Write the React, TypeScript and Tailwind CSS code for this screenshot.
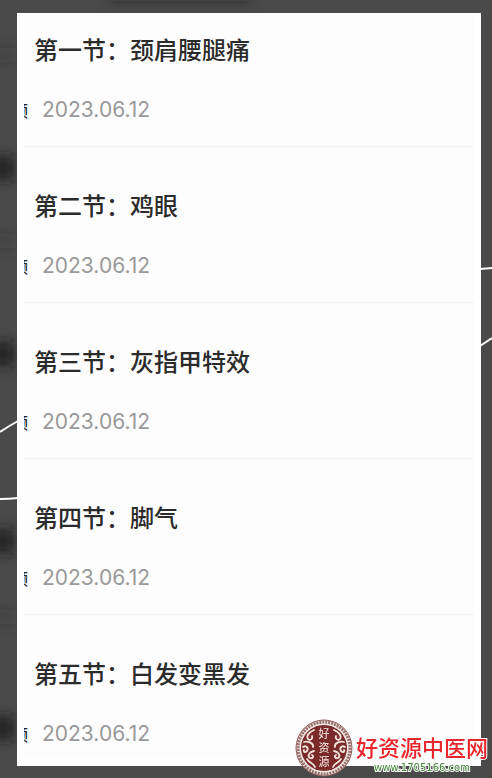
const lessons = [
  { title: "第一节：颈肩腰腿痛", date: "2023.06.12" },
  { title: "第二节：鸡眼", date: "2023.06.12" },
  { title: "第三节：灰指甲特效", date: "2023.06.12" },
  { title: "第四节：脚气", date: "2023.06.12" },
  { title: "第五节：白发变黑发", date: "2023.06.12" },
];

const Backdrop = () => (
  <svg
    className="absolute inset-0 h-full w-full"
    viewBox="0 0 492 778"
    preserveAspectRatio="none"
    aria-hidden="true"
  >
    <defs>
      <filter id="soft" x="-100%" y="-100%" width="300%" height="300%">
        <feGaussianBlur stdDeviation="6" />
      </filter>
    </defs>
    <g fill="#1c1c1c" filter="url(#soft)">
      <rect x="-8" y="156" width="22" height="24" opacity="0.8" />
      <rect x="-8" y="342" width="22" height="24" opacity="0.8" />
      <rect x="-8" y="529" width="22" height="24" opacity="0.8" />
      <rect x="-8" y="716" width="22" height="24" opacity="0.8" />
      <rect x="110" y="-8" width="140" height="10" opacity="0.4" />
      <rect x="-8" y="48" width="24" height="14" opacity="0.2" />
      <rect x="-8" y="234" width="24" height="14" opacity="0.2" />
      <rect x="-8" y="610" width="24" height="14" opacity="0.2" />
    </g>
    <g fill="none" stroke="#fff" strokeWidth="2">
      <path d="M0 432Q9 426 18 421" />
      <path d="M0 499Q9 499 18 498" />
      <path d="M480 269L492 268" />
      <path d="M480 346L492 338" />
    </g>
  </svg>
);

const Seal = () => (
  <svg className="h-[60px] w-[60px] shrink-0" viewBox="0 0 60 60" aria-hidden="true">
    <circle cx="30" cy="30" r="28" fill="#eee4e1" stroke="#8d5a55" strokeWidth="1" />
    <circle cx="30" cy="30" r="26" fill="none" stroke="#98706b" strokeWidth="3" strokeDasharray="2 1" />
    <circle cx="30" cy="30" r="23" fill="#7b2a2a" />
    <g fill="none" stroke="#f3e4de" strokeWidth="1.8" strokeLinecap="round">
      <path d="M20 12C15 14 12 18 14 21C16 23 19 21 18 18M10 24C14 23 20 25 19 29M9 29C12 27 15 30 13 33C11 35 9 34 10 32M20 33C15 34 13 38 16 40C19 41 20 38 18 37M13 41C16 46 19 44 21 49" />
      <path d="M40 12C45 14 48 18 46 21C44 23 41 21 42 18M50 24C46 23 40 25 41 29M51 29C48 27 45 30 47 33C49 35 51 34 50 32M40 33C45 34 47 38 44 40C41 41 40 38 42 37M47 41C44 46 41 44 39 49" />
    </g>
    <rect x="22" y="8" width="16" height="44" fill="#7b2a2a" />
    <g fill="#f8eeea" fontSize="11" textAnchor="middle" fontFamily="'Noto Sans CJK SC', sans-serif">
      <text x="30" y="20">好</text>
      <text x="30" y="34">资</text>
      <text x="30" y="48">源</text>
    </g>
  </svg>
);

const Watermark = () => (
  <div className="absolute right-1 bottom-0 flex items-end gap-[2px]">
    <Seal />
    <div className="flex flex-col items-center pb-1">
      <span className="text-[22px] leading-8 font-medium text-[#e8262b] [paint-order:stroke] [-webkit-text-stroke:2px_#fff]">
        好资源中医网
      </span>
      <span className="font-['DejaVu_Sans',sans-serif] text-[10px] leading-3 text-[#3f8a35] [paint-order:stroke] [-webkit-text-stroke:2px_#fff]">
        www.1705166.com
      </span>
    </div>
  </div>
);

const App = () => {
  return (
    <div className="relative min-h-screen overflow-hidden bg-[#4a4a4a] pt-[13px] pr-[11px] pb-3 pl-[17px] font-['Noto_Sans_CJK_SC',sans-serif]">
      <Backdrop />
      <main className="relative bg-white px-[7px] pb-2">
        <ul className="bg-[#fdfdfd]">
          {lessons.map((lesson) => (
            <li
              key={lesson.title}
              className="border-b border-[#f3f3f3] pt-[42px] pb-[22px] first:pt-5 last:border-0 last:pb-[10px]"
            >
              <h2 className="pl-[10px] text-2xl leading-8 font-medium text-[#2b2b2b]">
                {lesson.title}
              </h2>
              <div className="mt-[31px] flex items-center">
                {/* tail of the media type label */}
                <span className="flex w-1 justify-end overflow-hidden text-base leading-7 font-medium text-[#222]">
                  频
                </span>
                <time className="ml-[14px] font-[Inter,sans-serif] text-[21px] leading-7 text-[#999]">
                  {lesson.date}
                </time>
              </div>
            </li>
          ))}
        </ul>
      </main>
      <Watermark />
    </div>
  );
};

export default App;
